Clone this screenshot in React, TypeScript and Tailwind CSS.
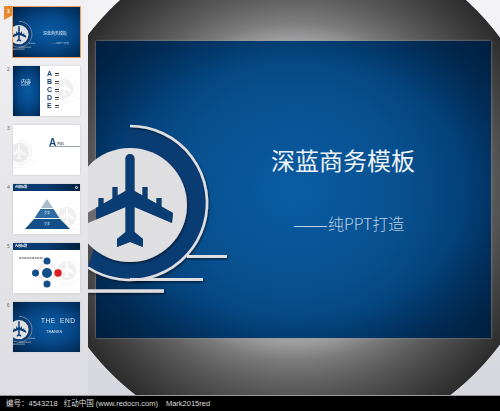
import React from "react";

const PLANE =
  "M125.5 158.5A4.5 4.5 0 0 1 134.5 158.5V191L142.5 195.6V187H147.5V198.4L156.5 203.6V198H161.5V206.4L173 213L172 223L134.5 207V232L143 239V247L130 242L117 247V239L125.5 232V207L88 223L87 213L98.5 206.4V198H103.5V203.6L112.5 198.4V187H117.5V195.6L125.5 191Z";

function Logo({ clip, shadow, color = "#0a3c74", light = "#dfdfe2" }: { clip?: string; shadow?: string; color?: string; light?: string }) {
  const f = shadow ? `url(#${shadow})` : undefined;
  return (
    <g>
      <path d="M130 126A77 77 0 1 1 88 267.5Z" fill={color} />
      <path d="M130 126A77 77 0 1 1 88 267.5" fill="none" stroke={light} strokeWidth="2.6" filter={f} />
      <path d="M130 279.5H203" stroke={light} strokeWidth="3" filter={f} />
      <path d="M187 256.5H227" stroke={light} strokeWidth="3" filter={f} />
      <path d="M88 291H164" stroke={light} strokeWidth="3.5" filter={f} />
      <circle cx="130" cy="205" r="57" fill={light} filter={f} />
      {clip && <path d={PLANE} fill="#6c6c6e" />}
      <path d={PLANE} fill={color} clipPath={clip ? `url(#${clip})` : undefined} />
    </g>
  );
}

function Mini({ faded }: { faded?: boolean }) {
  return (
    <svg viewBox="96 41 395 297" className={`absolute left-0 top-0 w-[67px] h-[50px] ${faded ? "opacity-20" : ""}`}>
      {faded ? <Logo color="#e4e4e4" light="#9a9a9a" /> : <Logo />}
    </svg>
  );
}

function Ghost({ left, top }: { left: string; top: string }) {
  return (
    <svg viewBox="50 41 441 297" className={`absolute w-[75px] h-[50px] opacity-15 ${left} ${top}`}>
      <Logo color="#ffffff" light="#9a9a9a" />
    </svg>
  );
}

function Header({ icon }: { icon?: boolean }) {
  return (
    <div className="relative h-[7px] flex items-center justify-between px-[2px] bg-gradient-to-r from-[#0a3a70] via-[#0a3a70] to-[#03223f]">
      <span className="text-[3px] leading-none text-white font-bold">内容标题</span>
      {icon && <span className="w-[3px] h-[3px] rounded-full border border-white" />}
    </div>
  );
}

const blue = "bg-[radial-gradient(ellipse_at_55%_50%,#0a5ba2_0%,#06488a_45%,#012c58_85%,#011f40_100%)]";

function Row({ n, active, children }: { n: number; active?: boolean; children: React.ReactNode }) {
  return (
    <div className="relative flex h-[50px] pl-[13px]">
      {active ? (
        <span className="absolute left-[4px] top-[-1px] w-[9px] h-[14px] bg-[#e8882f] [clip-path:polygon(0_0,100%_0,100%_65%,0_100%)] text-white text-[6px] leading-[10px] text-center font-bold font-['Liberation_Sans']">
          {n}
        </span>
      ) : (
        <span className="absolute left-[7px] top-[0px] text-[5px] leading-[7px] text-[#666] font-['Liberation_Sans']">{n}</span>
      )}
      <div
        className={`relative w-[67px] h-[50px] overflow-hidden bg-white blur-[0.4px] ${
          active ? "" : "shadow-[0_0_2px_#c4c4ca]"
        }`}
      >
        {children}
      </div>
      {active && <span className="absolute left-[12px] top-[-1px] w-[69px] h-[52px] border border-[#ef9d58]" />}
    </div>
  );
}

export default function App() {
  return (
    <div className="w-[500px] h-[411px] overflow-hidden flex flex-col bg-black font-['Noto_Sans_CJK_SC','Noto_Sans',sans-serif]">
      <div className="h-[395px] flex bg-gradient-to-b from-[#f4f4f6] to-[#d6d6de]">
        <aside className="relative z-10 w-[88px] shrink-0 flex flex-col gap-[9px] pt-[7px] bg-gradient-to-b from-[#f1f1f3] to-[#dcdce2]">
          <Row n={1} active>
            <div className={`absolute inset-0 ${blue}`} />
            <Mini />
            <span className="absolute left-[30px] top-[23px] text-[4px] leading-[6px] text-[#dbe6f2] whitespace-nowrap">深蓝商务模板</span>
            <span className="absolute left-[39px] top-[34px] text-[2.6px] leading-[4px] text-[#a9c2dc] whitespace-nowrap">——纯PPT打造</span>
          </Row>
          <Row n={2}>
            <Ghost left="left-[37px]" top="top-[-5px]" />
            <div className={`absolute left-0 top-0 w-[27px] h-full ${blue}`} />
            <span className="absolute left-[8px] top-[12px] text-[5px] leading-[6px] text-white">内容</span>
            <span className="absolute left-[8px] top-[18px] text-[2px] leading-[3px] text-[#c6d6e6]">Contents</span>
            <div className="absolute left-[34px] top-[5px] flex flex-col gap-[1.5px]">
              {["A", "B", "C", "D", "E"].map((l) => (
                <div key={l} className="flex items-center gap-[3px] h-[6.5px]">
                  <span className="text-[7px] leading-[6.5px] font-bold text-[#123f72] font-['Liberation_Sans']">{l}</span>
                  <span className="flex flex-col gap-[1px]">
                    <span className="w-[4px] h-[1px] bg-[#333]" />
                    <span className="w-[4px] h-[1px] bg-[#777]" />
                  </span>
                </div>
              ))}
            </div>
          </Row>
          <Row n={3}>
            <Mini faded />
            <span className="absolute left-[36px] top-[13px] text-[10px] leading-[10px] font-bold text-[#154a80] font-['Liberation_Sans']">A</span>
            <span className="absolute left-[44px] top-[17px] text-[3px] leading-[4px] text-[#333] whitespace-nowrap">内容1</span>
            <span className="absolute left-[36px] top-[21px] w-[31px] h-[1px] bg-[#8ca2b8]" />
          </Row>
          <Row n={4}>
            <Header icon />
            <Ghost left="left-[40px]" top="top-[5px]" />
            <svg viewBox="0 0 67 50" className="absolute left-0 top-0 w-[67px] h-[50px]">
              <path d="M34 15L28 24H40Z" fill="#a9bccd" />
              <path d="M27.4 25H40.6L46.4 34H21.6Z" fill="#2c6ba3" />
              <path d="M21 35H47L57 45H12Z" fill="#124f88" />
            </svg>
            <span className="absolute left-[31px] top-[27px] text-[3px] leading-[4px] text-white">文本</span>
            <span className="absolute left-[31px] top-[38px] text-[3px] leading-[4px] text-white">文本</span>
          </Row>
          <Row n={5}>
            <Header />
            <Ghost left="left-[40px]" top="top-[0px]" />
            <svg viewBox="0 0 67 50" className="absolute left-0 top-0 w-[67px] h-[50px]">
              <path d="M6 15H30" stroke="#444" strokeWidth="1" strokeDasharray="2 0.6" />
              <path d="M34 17L45 30L34 42L23 30Z" fill="none" stroke="#d9b8c4" strokeWidth="0.6" />
              <circle cx="34" cy="18" r="3.5" fill="#124f88" />
              <circle cx="34" cy="41" r="3.5" fill="#124f88" />
              <circle cx="22.5" cy="30" r="3.5" fill="#124f88" />
              <circle cx="45" cy="30" r="3.7" fill="#d81e1e" />
              <circle cx="34" cy="30" r="5" fill="#124f88" />
            </svg>
          </Row>
          <Row n={6}>
            <div className={`absolute inset-0 ${blue}`} />
            <Mini />
            <span className="absolute left-[28px] top-[15px] text-[6.5px] leading-[8px] tracking-[0.5px] text-[#dbe6f2] whitespace-nowrap font-['Liberation_Sans']">THE&nbsp;&nbsp;END</span>
            <span className="absolute left-[33px] top-[27px] text-[4px] leading-[6px] text-[#dbe6f2] whitespace-nowrap font-['Liberation_Sans']">THANKS</span>
          </Row>
        </aside>
        <main className="relative flex-1 pl-[8px] pt-[41px] bg-[radial-gradient(circle_258px_at_205px_191px,#a0a0a2_58%,#7a7a7a_66%,#626262_74%,#585858_78%,#444444_87%,#2c2c2c_99.7%,transparent_100%)]">
          <div className="relative w-[395px] h-[297px] shadow-[0_0_2px_#8f9cae] bg-[radial-gradient(ellipse_62%_75%_at_50%_50%,#0a5ca3_0%,#07508f_45%,#033e75_75%,#012c58_100%)]">
            <div className="absolute inset-0 bg-[radial-gradient(ellipse_75%_75%_at_50%_50%,transparent_58%,#001c38_105%)]" />
            <div className="relative flex flex-col text-white">
              <h1 className="pl-[175px] pt-[104px] text-[24px] leading-[30px] font-normal text-[#eef3f8] whitespace-nowrap">深蓝商务模板</h1>
              <p className="flex items-center pl-[197px] mt-[38px] h-[20px] text-[16px] leading-[20px] font-light text-[#bcd0e4] whitespace-nowrap">
                <span className="text-[21px] leading-none">——</span>
                <span>纯PPT打造</span>
              </p>
            </div>
          </div>
          <svg viewBox="88 0 412 395" className="absolute left-0 top-0 w-[412px] h-[395px] pointer-events-none">
            <defs>
              <filter id="sh" filterUnits="userSpaceOnUse" x="80" y="110" width="170" height="200">
                <feDropShadow dx="1" dy="1.5" stdDeviation="1.2" floodColor="#000" floodOpacity="0.55" />
              </filter>
              <clipPath id="pc">
                <rect x="96" y="0" width="300" height="395" />
              </clipPath>
            </defs>
            <Logo clip="pc" shadow="sh" />
          </svg>
        </main>
      </div>
      <footer className="h-[16px] flex items-center border-t border-[#9a9a9a] pl-[6px] text-[7.5px] leading-none text-[#dcdcdc] whitespace-nowrap bg-black font-['Liberation_Sans','Noto_Sans_CJK_SC',sans-serif]">
        <span>编号：4543218</span>
        <span className="ml-[6px]">红动中国 (www.redocn.com)</span>
        <span className="ml-[8px]">Mark2015red</span>
      </footer>
    </div>
  );
}
